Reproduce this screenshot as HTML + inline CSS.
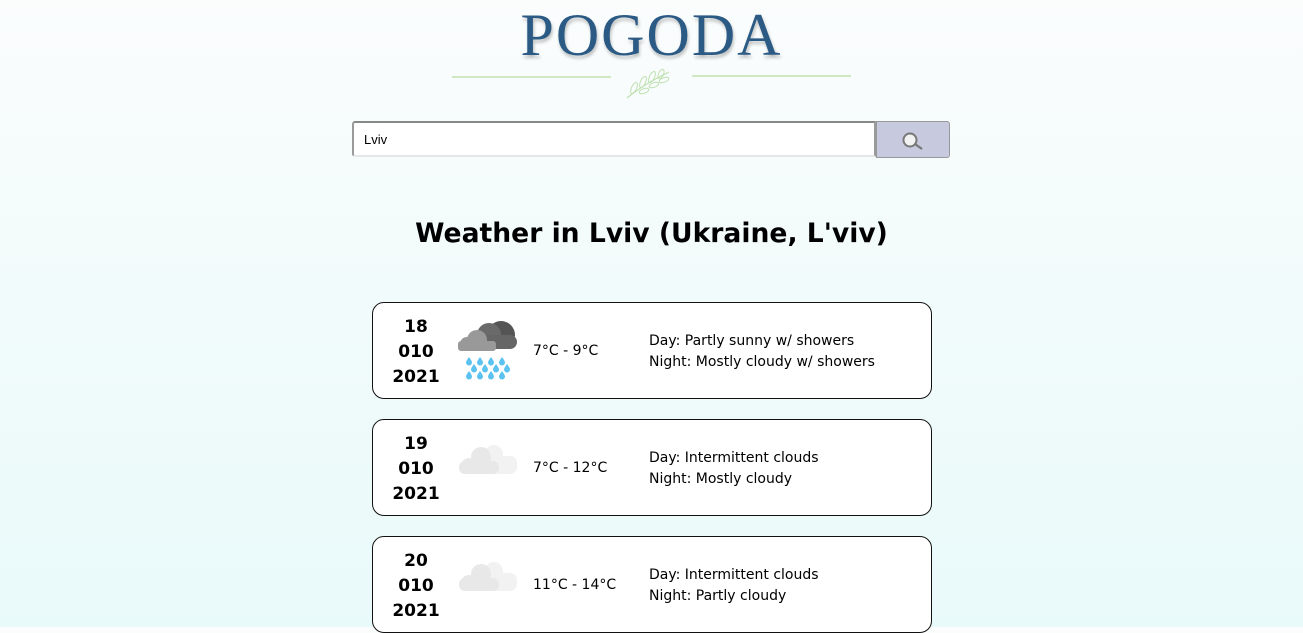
<!DOCTYPE html>
<html><head><meta charset="utf-8"><style>
html,body{margin:0;padding:0}
body{width:1303px;height:627px;overflow:hidden;background:linear-gradient(#fbfdfd 0%,#f3fbfb 40%,#e9fafa 100%);font-family:"DejaVu Sans","Liberation Sans",sans-serif;position:relative}
.logo{position:absolute;left:0;width:1303px;top:1px;text-align:center;font-family:"Liberation Serif",serif;font-size:60px;color:#2b5a85;letter-spacing:2px;text-shadow:1px 3px 3px rgba(0,0,0,.25)}
.line{position:absolute;top:76px;height:2px;background:#cfe8c2}
.search{position:absolute;left:352px;top:121px;width:524px;height:36px;border:2px solid #9a9a9a;border-top-color:#888;border-bottom-color:#e6e6e6;box-sizing:border-box;background:#fff;border-radius:3px 0 0 3px;font-size:13px;line-height:34px;padding-left:10px;font-family:"Liberation Sans",sans-serif}
.btn{position:absolute;left:876px;top:121px;width:74px;height:37px;background:#c7c9de;border:1px solid #999;box-sizing:border-box;border-radius:0 3px 3px 0}
h1{position:absolute;top:218px;left:0;width:1303px;text-align:center;margin:0;font-size:26.6px;font-weight:bold;letter-spacing:0}
.card{position:absolute;left:372px;width:560px;height:97px;border:1px solid #111;border-radius:12px;background:#fff;box-sizing:border-box}
.date{position:absolute;left:14px;top:12px;width:58px;text-align:center;font-weight:bold;font-size:17px;line-height:25px}
.ico{position:absolute;left:84px;top:14px}
.temp{position:absolute;left:160px;top:40px;font-size:14px}
.desc{position:absolute;left:276px;top:28px;font-size:14px;line-height:21px}
</style></head><body>
<div class="logo">POGODA</div>
<div class="line" style="left:452px;width:159px"></div>
<div class="line" style="left:692px;width:159px;top:75px"></div>
<svg style="position:absolute;left:624px;top:66px" width="50" height="34"><path d="M3 32 Q20 18 45 6" stroke="#bfe0b0" fill="none" stroke-width="1.2"/><g fill="none" stroke="#bfe0b0"><ellipse cx="10" cy="22" rx="2.5" ry="6" transform="rotate(25 10 22)"/><ellipse cx="19" cy="16" rx="2.5" ry="6" transform="rotate(25 19 16)"/><ellipse cx="28" cy="11" rx="2.5" ry="6" transform="rotate(25 28 11)"/><ellipse cx="37" cy="8" rx="2.5" ry="5" transform="rotate(25 37 8)"/><ellipse cx="20" cy="25" rx="5" ry="2.3" transform="rotate(-20 20 25)"/><ellipse cx="30" cy="19" rx="5" ry="2.3" transform="rotate(-20 30 19)"/><ellipse cx="40" cy="14" rx="5" ry="2.3" transform="rotate(-20 40 14)"/></g></svg>
<div class="search">Lviv</div>
<div class="btn"><svg width="74" height="37" style="position:absolute;left:-1px;top:-1px"><circle cx="34" cy="19" r="6.5" fill="#f2f2f2" stroke="#777" stroke-width="2"/><line x1="39" y1="23" x2="46" y2="28" stroke="#777" stroke-width="2.2"/></svg></div>
<h1>Weather in Lviv (Ukraine, L'viv)</h1>

<div class="card" style="top:302px">
<div class="date">18<br>010<br>2021</div>
<svg class="ico" width="64" height="66"><circle cx="44" cy="18" r="14" fill="#555"/><circle cx="32" cy="18" r="12" fill="#6a6a6a"/><rect x="26" y="18" width="34" height="14" rx="7" fill="#666"/><circle cx="20" cy="23" r="10" fill="#999"/><circle cx="10" cy="27" r="7" fill="#999"/><rect x="1" y="24" width="38" height="10" rx="3" fill="#999"/><g fill="#5cc3f0"><path id="d" d="M12 40 q-3 4 -3 5.5 a3 3 0 0 0 6 0 q0 -1.5 -3 -5.5z"/><use href="#d" x="11"/><use href="#d" x="22"/><use href="#d" x="33"/><use href="#d" x="5" y="7"/><use href="#d" x="16" y="7"/><use href="#d" x="27" y="7"/><use href="#d" x="38" y="7"/><use href="#d" y="14"/><use href="#d" x="11" y="14"/><use href="#d" x="22" y="14"/><use href="#d" x="33" y="14"/></g></svg>
<div class="temp">7°C - 9°C</div>
<div class="desc">Day: Partly sunny w/ showers<br>Night: Mostly cloudy w/ showers</div>
</div>

<div class="card" style="top:419px">
<div class="date">19<br>010<br>2021</div>
<svg class="ico" width="64" height="64"><circle cx="37" cy="20" r="9" fill="#f2f2f2"/><circle cx="53" cy="32" r="7" fill="#f2f2f2"/><rect x="32" y="22" width="28" height="18" rx="7" fill="#f2f2f2"/><circle cx="24" cy="23" r="10" fill="#e8e8e8"/><circle cx="12" cy="32" r="8" fill="#e8e8e8"/><rect x="2" y="27" width="40" height="13" rx="6" fill="#e8e8e8"/></svg>
<div class="temp">7°C - 12°C</div>
<div class="desc">Day: Intermittent clouds<br>Night: Mostly cloudy</div>
</div>

<div class="card" style="top:536px">
<div class="date">20<br>010<br>2021</div>
<svg class="ico" width="64" height="64"><circle cx="37" cy="20" r="9" fill="#f2f2f2"/><circle cx="53" cy="32" r="7" fill="#f2f2f2"/><rect x="32" y="22" width="28" height="18" rx="7" fill="#f2f2f2"/><circle cx="24" cy="23" r="10" fill="#e8e8e8"/><circle cx="12" cy="32" r="8" fill="#e8e8e8"/><rect x="2" y="27" width="40" height="13" rx="6" fill="#e8e8e8"/></svg>
<div class="temp">11°C - 14°C</div>
<div class="desc">Day: Intermittent clouds<br>Night: Partly cloudy</div>
</div>
</body></html>
